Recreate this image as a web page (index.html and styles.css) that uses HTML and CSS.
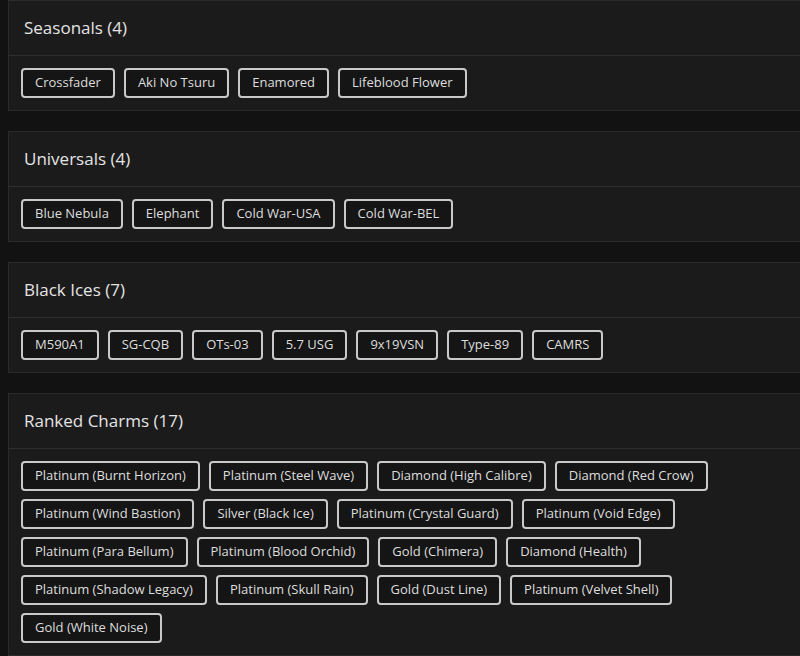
FILE: index.html
```
<!DOCTYPE html>
<html lang="en">

<head>
    <meta charset="UTF-8">
    <meta name="viewport" content="width=device-width, initial-scale=1.0">
    <title>Charms</title>
    <link rel="stylesheet" href="styles.css">
</head>

<body>

    <!-- Seasonals -->
    <div class="charm-card">
        <div class="charm-header">Seasonals (4)</div>
        <div class="charm-list">
            <span class="charm">Crossfader</span>
            <span class="charm">Aki No Tsuru</span>
            <span class="charm">Enamored</span>
            <span class="charm">Lifeblood Flower</span>
        </div>
    </div>

    <!-- Universals -->
    <div class="charm-card">
        <div class="charm-header">Universals (4)</div>
        <div class="charm-list">
            <span class="charm">Blue Nebula</span>
            <span class="charm">Elephant</span>
            <span class="charm">Cold War-USA</span>
            <span class="charm">Cold War-BEL</span>
        </div>
    </div>

    <!-- Black Ices -->
    <div class="charm-card">
        <div class="charm-header">Black Ices (7)</div>
        <div class="charm-list">
            <span class="charm">M590A1</span>
            <span class="charm">SG-CQB</span>
            <span class="charm">OTs-03</span>
            <span class="charm">5.7 USG</span>
            <span class="charm">9x19VSN</span>
            <span class="charm">Type-89</span>
            <span class="charm">CAMRS</span>
        </div>
    </div>

    <!-- Ranked Charms -->
    <div class="charm-card">
        <div class="charm-header">Ranked Charms (17)</div>
        <div class="charm-list">
            <span class="charm">Platinum (Burnt Horizon)</span>
            <span class="charm">Platinum (Steel Wave)</span>
            <span class="charm">Diamond (High Calibre)</span>
            <span class="charm">Diamond (Red Crow)</span>
            <span class="charm">Platinum (Wind Bastion)</span>
            <span class="charm">Silver (Black Ice)</span>
            <span class="charm">Platinum (Crystal Guard)</span>
            <span class="charm">Platinum (Void Edge)</span>
            <span class="charm">Platinum (Para Bellum)</span>
            <span class="charm">Platinum (Blood Orchid)</span>
            <span class="charm">Gold (Chimera)</span>
            <span class="charm">Diamond (Health)</span>
            <span class="charm">Platinum (Shadow Legacy)</span>
            <span class="charm">Platinum (Skull Rain)</span>
            <span class="charm">Gold (Dust Line)</span>
            <span class="charm">Platinum (Velvet Shell)</span>
            <span class="charm">Gold (White Noise)</span>
        </div>
    </div>

</body>

</html>
```

FILE: styles.css
```
/* General Styles */
html,
body {
    margin: 0;
    background-color: #121212;
    font-family: "Open Sans", Arial, sans-serif;
    overflow: hidden;
}

body {
    padding: 0 0 0 8px;
}

.charm-card {
    background: #1b1b1b;
    border: 1px solid #2a2a2a;
    margin: 0 -20px 20px 0;
}

.charm-header {
    height: 54px;
    line-height: 54px;
    padding-left: 15px;
    font-size: 17px;
    font-weight: 500;
    color: #e4e4e4;
    border-bottom: 1px solid #2e2e2e;
}

.charm-list {
    display: flex;
    flex-wrap: wrap;
    gap: 8px 9px;
    padding: 12px;
}

.charm {
    height: 26px;
    line-height: 25px;
    padding: 0 12px;
    border: 2px solid #c9c9c9;
    border-radius: 4px;
    background: #151515;
    color: #dedede;
    font-size: 13px;
}
```
